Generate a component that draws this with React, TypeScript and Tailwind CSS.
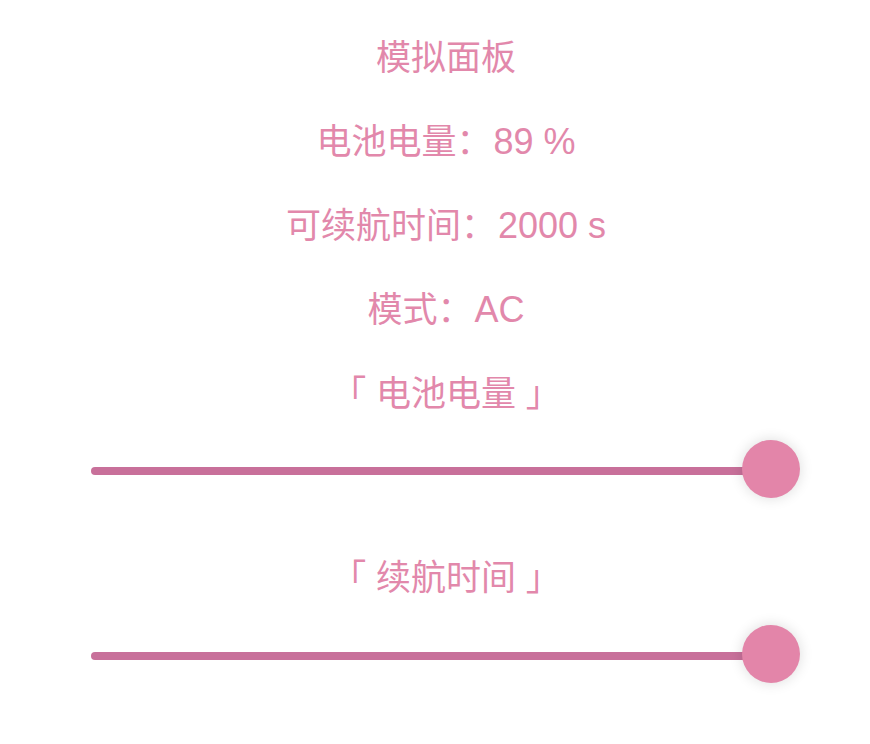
const textColor = 'text-[#e288ab]'

const Slider = () => {
    return (
        <div className="relative h-[58px] ml-[91px] w-[709px] flex items-center">
            <div className="h-[8px] mt-[4px] w-[680px] rounded-full bg-[#c8709a]" />
            <div className="absolute right-0 top-0 w-[58px] h-[58px] rounded-full bg-[#e385a9] shadow-[0_0_14px_rgba(0,0,0,0.14)]" />
        </div>
    )
}

const Line = ({ label, value }: { label: string; value?: string }) => (
    <div className="pl-[22px] text-center text-[35px] leading-[48px]">
        {label}
        {value && <span className="text-[36px] ml-[2px]">{value}</span>}
    </div>
)

const App = () => {
    return (
        <div
            className={`w-[870px] h-[744px] bg-white flex flex-col pt-[34px] ${textColor}`}
            style={{ fontFamily: '"Liberation Sans", "Noto Sans CJK SC", sans-serif' }}
        >
            <div className="flex flex-col gap-[36px]">
                <Line label="模拟面板" />
                <Line label="电池电量：" value="89 %" />
                <Line label="可续航时间：" value="2000 s" />
                <Line label="模式：" value="AC" />
                <Line label="「 电池电量 」" />
            </div>
            <div className="mt-[22px]">
                <Slider />
            </div>
            <div className="mt-[56px]">
                <Line label="「 续航时间 」" />
            </div>
            <div className="mt-[23px]">
                <Slider />
            </div>
        </div>
    )
}

export default App
